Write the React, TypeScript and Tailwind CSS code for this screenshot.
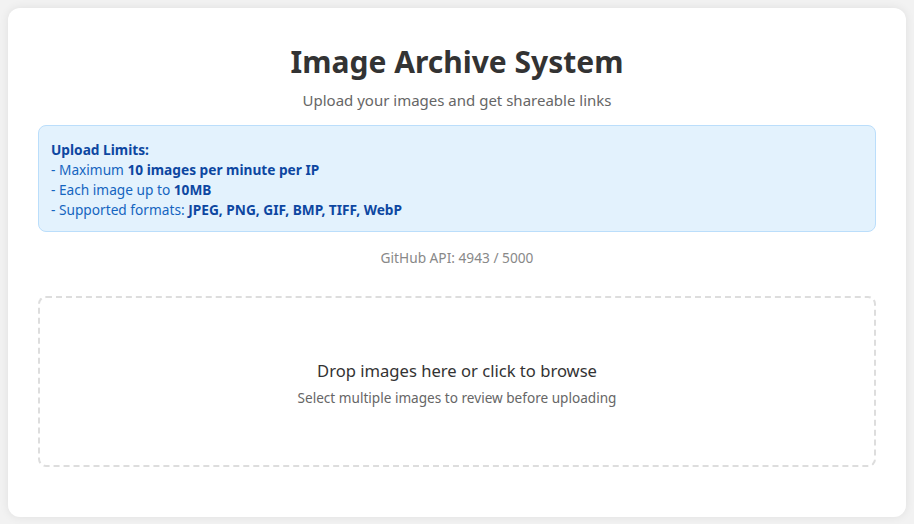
export default function App() {
  return (
    <div
      className="min-h-[524px] bg-[#f2f2f2] p-2"
      style={{ fontFamily: '"Noto Sans", "Open Sans", sans-serif' }}
    >
      <div className="rounded-xl bg-white px-[30px] pt-[30px] pb-[50px] shadow-[0_0_10px_rgba(0,0,0,0.08)]">
        <h1 className="text-center text-[30px] leading-[48px] font-bold text-[#333]">
          Image Archive System
        </h1>
        <p className="mt-[2px] text-center text-[15px] leading-6 text-[#666]">
          Upload your images and get shareable links
        </p>

        <div className="mt-[13px] rounded-lg border border-[#bbdefb] bg-[#e3f2fd] px-3 pt-[14px] pb-[11px] text-[13.7px] leading-5 text-[#1565c0]">
          <div className="font-bold text-[#0d47a1]">Upload Limits:</div>
          <div>
            - Maximum <span className="font-bold text-[#0d47a1]">10 images per minute per IP</span>
          </div>
          <div>
            - Each image up to <span className="font-bold text-[#0d47a1]">10MB</span>
          </div>
          <div>
            - Supported formats:{' '}
            <span className="font-bold text-[#0d47a1]">JPEG, PNG, GIF, BMP, TIFF, WebP</span>
          </div>
        </div>

        <p className="mt-[16px] text-center text-[13.7px] leading-5 text-[#888]">
          GitHub API: 4943 / 5000
        </p>

        {/* Drop zone */}
        <div className="mt-[28px] flex h-[171px] cursor-pointer flex-col items-center justify-center rounded-lg border-2 border-dashed border-[#ddd] pt-[2px]">
          <p className="text-[16.6px] leading-7 text-[#333]">Drop images here or click to browse</p>
          <p className="mt-[3px] text-[13.6px] leading-5 text-[#666]">
            Select multiple images to review before uploading
          </p>
        </div>
      </div>
    </div>
  );
}
